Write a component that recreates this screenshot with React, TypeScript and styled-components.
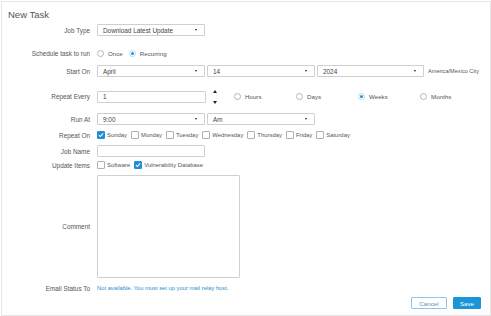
import React from 'react';
import styled, { createGlobalStyle } from 'styled-components';

const GlobalStyle = createGlobalStyle`
  html, body {
    margin: 0;
    padding: 0;
    background: #fff;
  }
  body {
    font-family: "Liberation Sans", Arial, sans-serif;
    color: #444;
  }
`;

const Panel = styled.div`
  box-sizing: border-box;
  width: 490px;
  height: 315px;
  margin: 1px 0 0 1px;
  border: 1px solid #e6e6e6;
  background: #fff;
`;

const Title = styled.h1`
  margin: 0;
  padding: 7px 0 0 6px;
  font-size: 9.5px;
  font-weight: normal;
  color: #555;
  line-height: 12px;
`;

const Row = styled.div<{ $top: number; $h?: number }>`
  display: grid;
  grid-template-columns: 88px auto;
  column-gap: 7px;
  align-items: center;
  margin-top: ${({ $top }) => $top}px;
  min-height: ${({ $h }) => $h ?? 12}px;
`;

const Label = styled.div`
  text-align: right;
  font-size: 6.4px;
  color: #555;
  white-space: nowrap;
`;

const Controls = styled.div<{ $gap?: number; $left?: number }>`
  display: flex;
  align-items: center;
  gap: ${({ $gap }) => $gap ?? 2}px;
  margin-left: ${({ $left }) => $left ?? 0}px;
`;

const Select = styled.div<{ $w?: number }>`
  box-sizing: border-box;
  width: ${({ $w }) => $w ?? 108}px;
  height: 12px;
  border: 1px solid #cfcfcf;
  border-radius: 1px;
  display: flex;
  align-items: center;
  justify-content: space-between;
  padding: 0 7px 0 5px;
  font-size: 6.4px;
  color: #444;
  background: #fff;
`;

const Caret = styled.span`
  width: 0;
  height: 0;
  border-left: 1.6px solid transparent;
  border-right: 1.6px solid transparent;
  border-top: 2.2px solid #222;
`;

const TextInput = styled.div<{ $w?: number }>`
  box-sizing: border-box;
  width: ${({ $w }) => $w ?? 108}px;
  height: 12px;
  border: 1px solid #cfcfcf;
  border-radius: 1px;
  display: flex;
  align-items: center;
  padding: 0 5px;
  font-size: 6.4px;
  color: #444;
`;

const Spinner = styled.div`
  display: flex;
  flex-direction: column;
  justify-content: space-between;
  align-items: center;
  height: 14px;
  width: 6px;
  margin-left: 6px;
`;

const Arrow = styled.span<{ $up?: boolean }>`
  width: 0;
  height: 0;
  border-left: 2px solid transparent;
  border-right: 2px solid transparent;
  ${({ $up }) => ($up ? 'border-bottom: 3px solid #222;' : 'border-top: 3px solid #222;')}
`;

const Option = styled.label<{ $w?: number }>`
  display: flex;
  align-items: center;
  gap: 4px;
  font-size: 6.2px;
  color: #555;
  white-space: nowrap;
  ${({ $w }) => ($w ? `width: ${$w}px;` : '')}
`;

const CheckOption = styled(Option)`
  gap: 2px;
  font-size: 5.9px;
`;

const Radio = styled.span<{ $on?: boolean }>`
  box-sizing: border-box;
  width: 7px;
  height: 7px;
  border-radius: 50%;
  border: 0.8px solid ${({ $on }) => ($on ? '#b9d8ee' : '#b5b5b5')};
  background: #fff;
  display: flex;
  align-items: center;
  justify-content: center;
  &::after {
    content: '';
    width: 3px;
    height: 3px;
    border-radius: 50%;
    background: ${({ $on }) => ($on ? '#1f8fd4' : 'transparent')};
  }
`;

const Box = styled.span<{ $on?: boolean }>`
  box-sizing: border-box;
  width: 8px;
  height: 8px;
  border-radius: 1px;
  border: 0.8px solid ${({ $on }) => ($on ? '#1f8fd4' : '#b0b0b0')};
  background: ${({ $on }) => ($on ? '#1f8fd4' : '#fff')};
  display: flex;
  align-items: center;
  justify-content: center;
`;

const Zone = styled.span`
  font-size: 5.6px;
  color: #555;
  margin-left: 2px;
  white-space: nowrap;
`;

const TextArea = styled.div`
  box-sizing: border-box;
  width: 143px;
  height: 103px;
  border: 1px solid #d0d0d0;
  border-radius: 1px;
`;

const Note = styled.span`
  font-size: 5.8px;
  color: #2a8fcf;
  white-space: nowrap;
`;

const Footer = styled.div`
  display: flex;
  justify-content: flex-end;
  gap: 6px;
  padding-right: 9px;
  margin-top: 4px;
`;

const Button = styled.button<{ $primary?: boolean }>`
  box-sizing: border-box;
  height: 12px;
  padding: 0;
  width: ${({ $primary }) => ($primary ? 28 : 36)}px;
  font-family: inherit;
  font-size: 6.2px;
  border-radius: 1px;
  border: 1px solid ${({ $primary }) => ($primary ? '#1a95d8' : '#8cc6e8')};
  background: ${({ $primary }) => ($primary ? '#1a95d8' : '#fff')};
  color: ${({ $primary }) => ($primary ? '#fff' : '#5b8fb3')};
`;

const Check = () => (
  <svg width="6" height="6" viewBox="0 0 10 10">
    <path d="M1.5 5.2 L4 7.6 L8.6 2.4" fill="none" stroke="#fff" strokeWidth="1.8" />
  </svg>
);

const days = ['Sunday', 'Monday', 'Tuesday', 'Wednesday', 'Thursday', 'Friday', 'Saturday'];
const units = ['Hours', 'Days', 'Weeks', 'Months'];

const App = () => (
  <>
    <GlobalStyle />
    <Panel>
      <Title>New Task</Title>

      <Row $top={3}>
        <Label>Job Type</Label>
        <Controls>
          <Select>
            Download Latest Update
            <Caret />
          </Select>
        </Controls>
      </Row>

      <Row $top={11}>
        <Label>Schedule task to run</Label>
        <Controls $gap={6}>
          <Option>
            <Radio />
            Once
          </Option>
          <Option>
            <Radio $on />
            Recurring
          </Option>
        </Controls>
      </Row>

      <Row $top={6}>
        <Label>Start On</Label>
        <Controls>
          <Select>
            April
            <Caret />
          </Select>
          <Select>
            14
            <Caret />
          </Select>
          <Select $w={107}>
            2024
            <Caret />
          </Select>
          <Zone>America/Mexico City</Zone>
        </Controls>
      </Row>

      <Row $top={12} $h={15}>
        <Label>Repeat Every</Label>
        <Controls $gap={0}>
          <TextInput $w={109}>1</TextInput>
          <Spinner>
            <Arrow $up />
            <Arrow />
          </Spinner>
          <Controls $gap={0} $left={16}>
            {units.map((u) => (
              <Option key={u} $w={62}>
                <Radio $on={u === 'Weeks'} />
                {u}
              </Option>
            ))}
          </Controls>
        </Controls>
      </Row>

      <Row $top={9}>
        <Label>Run At</Label>
        <Controls>
          <Select>
            9:00
            <Caret />
          </Select>
          <Select>
            Am
            <Caret />
          </Select>
        </Controls>
      </Row>

      <Row $top={5} $h={10}>
        <Label>Repeat On</Label>
        <Controls $gap={4}>
          {days.map((d, i) => (
            <CheckOption key={d}>
              <Box $on={i === 0}>{i === 0 && <Check />}</Box>
              {d}
            </CheckOption>
          ))}
        </Controls>
      </Row>

      <Row $top={5}>
        <Label>Job Name</Label>
        <Controls>
          <TextInput />
        </Controls>
      </Row>

      <Row $top={3} $h={10}>
        <Label>Update Items</Label>
        <Controls $gap={4}>
          <CheckOption>
            <Box />
            Software
          </CheckOption>
          <CheckOption>
            <Box $on>
              <Check />
            </Box>
            Vulnerability Database
          </CheckOption>
        </Controls>
      </Row>

      <Row $top={5}>
        <Label>Comment</Label>
        <Controls>
          <TextArea />
        </Controls>
      </Row>

      <Row $top={5} $h={10}>
        <Label>Email Status To</Label>
        <Controls>
          <Note>Not available. You must set up your mail relay host.</Note>
        </Controls>
      </Row>

      <Footer>
        <Button>Cancel</Button>
        <Button $primary>Save</Button>
      </Footer>
    </Panel>
  </>
);

export default App;
